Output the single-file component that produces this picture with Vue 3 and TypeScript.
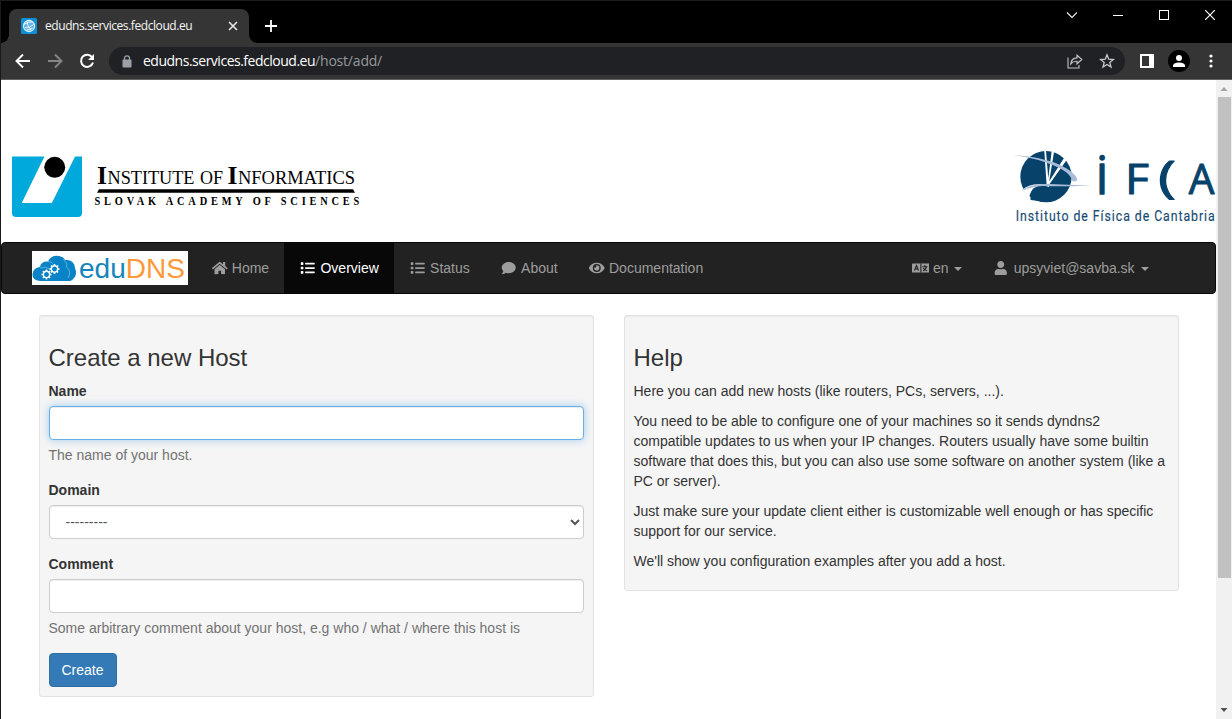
<script setup lang="ts">
import { ref } from 'vue'

interface NavItem {
  label: string
  icon: 'home' | 'list' | 'comment' | 'eye'
  active?: boolean
}

const navItems: NavItem[] = [
  { label: 'Home', icon: 'home' },
  { label: 'Overview', icon: 'list', active: true },
  { label: 'Status', icon: 'list' },
  { label: 'About', icon: 'comment' },
  { label: 'Documentation', icon: 'eye' },
]

const icons: Record<NavItem['icon'], { width: number; path: string }> = {
  home: {
    width: 576,
    path: 'M280.37 148.26L96 300.11V464a16 16 0 0 0 16 16l112.06-.29a16 16 0 0 0 15.92-16V368a16 16 0 0 1 16-16h64a16 16 0 0 1 16 16v95.64a16 16 0 0 0 16 16.05L464 480a16 16 0 0 0 16-16V300L295.67 148.26a12.19 12.19 0 0 0-15.3 0zM571.6 251.47L488 182.56V44.05a12 12 0 0 0-12-12h-56a12 12 0 0 0-12 12v72.61L318.47 43a48 48 0 0 0-61 0L4.34 251.47a12 12 0 0 0-1.6 16.9l25.5 31A12 12 0 0 0 45.15 301l235.22-193.74a12.19 12.19 0 0 1 15.3 0L530.9 301a12 12 0 0 0 16.9-1.6l25.5-31a12 12 0 0 0-1.7-16.93z',
  },
  list: {
    width: 512,
    path: 'M16 48h64a16 16 0 0 1 16 16v64a16 16 0 0 1-16 16H16a16 16 0 0 1-16-16V64a16 16 0 0 1 16-16zm0 160h64a16 16 0 0 1 16 16v64a16 16 0 0 1-16 16H16a16 16 0 0 1-16-16v-64a16 16 0 0 1 16-16zm0 160h64a16 16 0 0 1 16 16v64a16 16 0 0 1-16 16H16a16 16 0 0 1-16-16v-64a16 16 0 0 1 16-16zM176 64h320a16 16 0 0 1 16 16v32a16 16 0 0 1-16 16H176a16 16 0 0 1-16-16V80a16 16 0 0 1 16-16zm0 160h320a16 16 0 0 1 16 16v32a16 16 0 0 1-16 16H176a16 16 0 0 1-16-16v-32a16 16 0 0 1 16-16zm0 160h320a16 16 0 0 1 16 16v32a16 16 0 0 1-16 16H176a16 16 0 0 1-16-16v-32a16 16 0 0 1 16-16z',
  },
  comment: {
    width: 512,
    path: 'M256 32C114.6 32 0 125.1 0 240c0 49.6 21.4 95 57 130.7C44.5 421.1 2.7 466 2.2 466.5c-2.2 2.3-2.8 5.7-1.5 8.7S4.8 480 8 480c66.3 0 116-31.8 140.6-51.4 32.7 12.3 69 19.4 107.4 19.4 141.4 0 256-93.1 256-208S397.4 32 256 32z',
  },
  eye: {
    width: 576,
    path: 'M572.52 241.4C518.29 135.59 410.93 64 288 64S57.68 135.64 3.48 241.41a32.35 32.35 0 0 0 0 29.19C57.71 376.41 165.07 448 288 448s230.32-71.64 284.52-177.41a32.35 32.35 0 0 0 0-29.19zM288 400a144 144 0 1 1 144-144 143.93 143.93 0 0 1-144 144zm0-240a95.31 95.31 0 0 0-25.31 3.79 47.85 47.85 0 0 1-66.9 66.9A95.78 95.78 0 1 0 288 160z',
  },
}

const helpParagraphs: string[] = [
  'Here you can add new hosts (like routers, PCs, servers, ...).',
  'You need to be able to configure one of your machines so it sends dyndns2 compatible updates to us when your IP changes. Routers usually have some builtin software that does this, but you can also use some software on another system (like a PC or server).',
  'Just make sure your update client either is customizable well enough or has specific support for our service.',
  "We'll show you configuration examples after you add a host.",
]

const gearTeeth = [0, 45, 90, 135, 180, 225, 270, 315]

const hostName = ref('')
const domain = ref('')
const comment = ref('')
</script>

<template>
  <div class="window">
    <div class="titlebar">
      <div class="tab">
        <svg class="favicon" width="16" height="16" viewBox="0 0 16 16">
          <rect width="16" height="16" rx="1.5" fill="#0f8fd6" />
          <circle cx="8" cy="8" r="5.6" fill="#5fb5e6" stroke="#e6f5fd" stroke-width="1.1" />
          <path d="M3 6.5Q7 3 11.5 4M4 9.5Q8 10.500 12.600 6.500M5.500 12Q9 12 11.500 10M6 3.500Q6 7 10 12" fill="none" stroke="#f2faff" stroke-width="1" />
        </svg>
        <span class="tab-title">edudns.services.fedcloud.eu</span>
        <svg class="tab-close" width="10" height="10" viewBox="0 0 10 10">
          <path d="M1 1l8 8M9 1l-8 8" stroke="#e8e8e8" stroke-width="1.6" />
        </svg>
      </div>
      <svg class="new-tab" width="12" height="12" viewBox="0 0 12 12">
        <path d="M6 0v12M0 6h12" stroke="#fff" stroke-width="1.8" />
      </svg>
      <div class="controls">
        <svg width="12" height="10" viewBox="0 0 12 10"><path d="M2 2.500l5 5 5-5" fill="none" stroke="#eee" stroke-width="1.200" /></svg>
        <svg width="10" height="10" viewBox="0 0 10 10"><path d="M0 5.500h10" stroke="#fff" /></svg>
        <svg width="10" height="10" viewBox="0 0 10 10"><rect x=".5" y=".5" width="9" height="9" fill="none" stroke="#fff" /></svg>
        <svg width="10" height="10" viewBox="0 0 10 10"><path d="M0 0l10 10M10 0L0 10" stroke="#fff" stroke-width="1.200" /></svg>
      </div>
    </div>

    <div class="toolbar">
      <svg class="nav-button" width="16" height="16" viewBox="0 0 16 16"><path d="M15 8H2M8 1.500L1.500 8 8 14.500" fill="none" stroke="#fff" stroke-width="1.9" /></svg>
      <svg class="nav-button" width="16" height="16" viewBox="0 0 16 16"><path d="M1 8h13M8 1.500L14.500 8 8 14.500" fill="none" stroke="#858585" stroke-width="1.9" /></svg>
      <svg class="nav-button" width="16" height="16" viewBox="0 0 16 16">
        <path d="M13.300 4.500A6.100 6.100 0 1 0 14 9.500" fill="none" stroke="#fff" stroke-width="2" />
        <path d="M15 1v6H9z" fill="#fff" />
      </svg>
      <div class="address">
        <svg class="lock" width="10" height="13" viewBox="0 0 10 13">
          <rect x=".5" y="4.500" width="9" height="8" rx="1" fill="#9aa0a6" />
          <path d="M2.500 5V3.300a2.500 2.500 0 0 1 5 0V5" fill="none" stroke="#9aa0a6" stroke-width="1.300" />
        </svg>
        <span class="url"><span class="url-host">edudns.services.fedcloud.eu</span><span class="url-path">/host/add/</span></span>
        <svg class="share" width="16" height="15" viewBox="0 0 16 15">
          <path d="M1 3.500v10.500h11v-3" fill="none" stroke="#bdc1c6" stroke-width="1.100" />
          <path d="M10 1.200l4.800 4.300L10 9.800V7.300Q6 7 3.800 9.800 4.200 4.200 10 3.800z" fill="none" stroke="#bdc1c6" stroke-width="1.200" />
        </svg>
        <svg class="star" width="16" height="16" viewBox="0 0 16 16">
          <path d="M8 1.800l1.700 4.400 4.700.3-3.600 3 1.200 4.600L8 11.500l-4 2.600 1.200-4.600-3.600-3 4.700-.3z" fill="none" stroke="#c5c8cc" stroke-width="1.300" />
        </svg>
      </div>
      <svg class="side-panel" width="14" height="14" viewBox="0 0 14 14">
        <path fill-rule="evenodd" d="M0 0h14v14H0zM2 2v10h7V2z" fill="#fff" />
      </svg>
      <svg class="profile" width="22" height="22" viewBox="0 0 22 22">
        <circle cx="11" cy="11" r="11" fill="#000" />
        <circle cx="11" cy="8" r="3" fill="#fff" />
        <path d="M5 17v-1.500C5 13.200 9 12.400 11 12.400s6 .8 6 3.100V17z" fill="#fff" />
      </svg>
      <svg class="menu" width="4" height="14" viewBox="0 0 4 14">
        <circle cx="2" cy="2" r="1.600" fill="#fff" /><circle cx="2" cy="7" r="1.600" fill="#fff" /><circle cx="2" cy="12" r="1.600" fill="#fff" />
      </svg>
    </div>

    <div class="viewport">
      <div class="page">
        <header class="logos">
          <svg class="institute" width="350" height="66" viewBox="10 154 350 66">
            <path d="M12 156.500h70V213q0 4-4 4H16q-4 0-4-4z" fill="#00a9dc" />
            <path d="M44.700 156h30.600l-23.500 47H21.700z" fill="#fff" />
            <circle cx="54.700" cy="167.300" r="10.500" fill="#000" />
            <g class="serif" fill="#000">
              <text x="97" y="184" font-size="25.500" font-weight="bold">I</text>
              <text x="107.500" y="184" font-size="18.500" textLength="87" lengthAdjust="spacingAndGlyphs">NSTITUTE</text>
              <text x="200" y="184" font-size="18.500" textLength="23" lengthAdjust="spacingAndGlyphs">OF</text>
              <text x="227.500" y="184" font-size="25.500" font-weight="bold">I</text>
              <text x="238" y="184" font-size="18.500" textLength="117" lengthAdjust="spacingAndGlyphs">NFORMATICS</text>
              <text transform="translate(94.500 205.300) scale(.88 1)" font-size="11.800" font-weight="bold" textLength="301" lengthAdjust="spacing">SLOVAK ACADEMY OF SCIENCES</text>
            </g>
            <path d="M99 189.300h254l2 3.500H97z" fill="#000" />
          </svg>
          <svg class="ifca" width="216" height="92" viewBox="0 0 648 276">
            <circle cx="138" cy="110" r="77" fill="#07426b" />
            <path d="M133 32h5l9 110-7-4zM155 33l7 3-17 104-3-2zM192 54l8 6-54 76-3-5z" fill="#fff" />
            <path d="M150 136q-60-10-83 14-2 6 6 22l12 8q4-30 30-38 20-6 35-6z" fill="#fff" />
            <path d="M38 45Q125 48 182 76 226 98 232 118 230 128 216 122 211 97 160 76 110 54 38 45z" fill="#a9bcd7" />
            <path d="M66 153Q85 131 150 132L275 137Q205 139 150 139 95 137 66 153z" fill="#a9bcd7" />
            <path d="M92 180Q86 145 116 139 145 135 136 143L146 146Q120 150 134 165L110 182z" fill="#07426b" />
            <g class="ifca-letters" fill="#07426b" stroke="#07426b" stroke-width="3" stroke-linejoin="round">
              <text x="289" y="163" font-size="124" stroke-width="5">İ</text>
              <text x="375" y="163" font-size="124" textLength="72" lengthAdjust="spacingAndGlyphs">F</text>
              <text x="474" y="157" font-size="133" textLength="54" lengthAdjust="spacingAndGlyphs">(</text>
              <text x="566" y="163" font-size="124" textLength="77" lengthAdjust="spacingAndGlyphs">A</text>
            </g>
            <text class="ifca-name" transform="translate(47 242) scale(.84 1)" font-size="44" fill="#174b73" stroke="#174b73" stroke-width=".5" textLength="711" lengthAdjust="spacing">Instituto de Física de Cantabria</text>
          </svg>
        </header>

        <nav class="navbar">
          <a class="brand">
            <svg width="156" height="34" viewBox="0 0 156 34">
              <path d="M8 30Q0 29 .5 23 1 17 8 16 9 10 16 10.500 19 4 27 5 32 6 33 9 42 8 43 17 46 24 41 28 40 30 36 30z" fill="#0a83c6" />
              <path d="M8 17Q14 15 18 18M16 10.500Q19 10.500 21 12.500M31 8.500Q36 12 34.500 16 40 20 36 27" fill="none" stroke="#7cc4ea" stroke-width=".7" />
              <g v-for="(gear, g) in [{ x: 14.5, y: 23.5 }, { x: 22.5, y: 18 }]" :key="g" :transform="`translate(${gear.x} ${gear.y})`">
                <circle r="3.200" fill="#0a83c6" stroke="#fff" stroke-width="1.500" />
                <rect v-for="a in gearTeeth" :key="a" x="-.8" y="-5" width="1.600" height="1.800" fill="#fff" :transform="`rotate(${a})`" />
              </g>
              <text x="47" y="27" font-size="28"><tspan fill="#1684bd">edu</tspan><tspan fill="#ff9838">DNS</tspan></text>
            </svg>
          </a>
          <a v-for="item in navItems" :key="item.label" class="nav-link" :class="{ active: item.active }">
            <svg class="fw" width="17.500" height="14" :viewBox="`${(icons[item.icon].width - 640) / 2} 0 640 512`"><path :d="icons[item.icon].path" fill="currentColor" /></svg>
            <span>{{ item.label }}</span>
          </a>
          <div class="nav-right">
            <a class="nav-link">
              <svg class="fw" width="17.500" height="14" viewBox="0 0 17.500 14">
                <rect y="2.500" width="17.500" height="9" rx=".5" fill="currentColor" />
                <path d="M2.500 9.500l2-5 2 5M3.200 8h2.600M12.900 4v1.500M10.300 5.700h5.200M11 9.700q3-1 3.600-4M11.500 7q1 2 3.500 2.700M8.900 2.500v9" fill="none" stroke="#222" stroke-width="1.100" />
              </svg>
              <span>en</span><i class="caret"></i>
            </a>
            <a class="nav-link">
              <svg class="fw" width="17.500" height="14" viewBox="-96 0 640 512"><path d="M224 256c70.700 0 128-57.300 128-128S294.700 0 224 0 96 57.300 96 128s57.300 128 128 128zm89.600 32h-16.700c-22.200 10.200-46.900 16-72.900 16s-50.600-5.800-72.900-16h-16.700C60.200 288 0 348.200 0 422.400V464c0 26.500 21.500 48 48 48h352c26.500 0 48-21.500 48-48v-41.600c0-74.200-60.200-134.400-134.400-134.400z" fill="currentColor" /></svg>
              <span>upsyviet@savba.sk</span><i class="caret"></i>
            </a>
          </div>
        </nav>

        <main class="columns">
          <form class="well" @submit.prevent>
            <h3>Create a new Host</h3>
            <div class="group">
              <label for="name">Name</label>
              <input id="name" v-model="hostName" class="control focused" type="text" />
              <p class="hint">The name of your host.</p>
            </div>
            <div class="group">
              <label for="domain">Domain</label>
              <select id="domain" v-model="domain" class="control">
                <option value="">---------</option>
              </select>
            </div>
            <div class="group">
              <label for="comment">Comment</label>
              <input id="comment" v-model="comment" class="control" type="text" />
              <p class="hint">Some arbitrary comment about your host, e.g who / what / where this host is</p>
            </div>
            <button class="create" type="submit">Create</button>
          </form>
          <section class="well help">
            <h3>Help</h3>
            <p v-for="text in helpParagraphs" :key="text">{{ text }}</p>
          </section>
        </main>
      </div>

      <div class="scrollbar">
        <svg width="16" height="17" viewBox="0 0 16 17"><path d="M8 7l3.500 4h-7z" fill="#a3a3a3" /></svg>
        <div class="thumb"></div>
        <svg class="down" width="16" height="17" viewBox="0 0 16 17"><path d="M4.500 6h7L8 10z" fill="#505050" /></svg>
      </div>
    </div>
  </div>
</template>

<style>
html,
body {
  margin: 0;
  overflow: hidden;
}
</style>

<style scoped>
.window {
  box-sizing: border-box;
  width: 1232px;
  height: 719px;
  display: flex;
  flex-direction: column;
  border-left: 1px solid #1a1a1c;
  background: #fff;
  overflow: hidden;
  font: 14px/20px "Liberation Sans", Arial, sans-serif;
  color: #333;
}
svg {
  display: block;
  flex: none;
}
.titlebar {
  box-sizing: border-box;
  height: 43px;
  border-top: 1px solid #1a1a1c;
  background: #000;
  display: flex;
  padding-left: 8px;
}
.tab {
  position: relative;
  box-sizing: border-box;
  width: 240px;
  height: 34px;
  margin-top: 8px;
  padding: 0 11px 0 12px;
  border-radius: 8px 8px 0 0;
  background: #353535;
  display: flex;
  align-items: center;
}
.tab::before,
.tab::after {
  content: "";
  position: absolute;
  bottom: 0;
  width: 8px;
  height: 8px;
}
.tab::before {
  left: -8px;
  background: radial-gradient(circle at 0 0, transparent 7.5px, #353535 8px);
}
.tab::after {
  right: -8px;
  background: radial-gradient(circle at 100% 0, transparent 7.5px, #353535 8px);
}
.tab-title {
  margin-left: 8px;
  font: 12px/16px "Open Sans", "Noto Sans", sans-serif;
  letter-spacing: -0.43px;
  color: #f5f5f5;
  white-space: nowrap;
}
.tab-close {
  margin-left: auto;
}
.new-tab {
  margin: 19px 0 0 16px;
}
.controls {
  display: flex;
  gap: 36px;
  margin: 9px 17px 0 auto;
}
.toolbar {
  box-sizing: border-box;
  height: 37px;
  border-bottom: 1px solid #606060;
  background: #353535;
  display: flex;
  align-items: center;
  padding-left: 14px;
}
.nav-button {
  margin-right: 16px;
}
.address {
  width: 1016px;
  height: 28px;
  margin-left: -2px;
  border-radius: 14px;
  background: #202124;
  display: flex;
  align-items: center;
}
.lock {
  margin-left: 13px;
}
.url {
  margin-left: 11px;
  font: 14px/20px "Open Sans", "Noto Sans", sans-serif;
  letter-spacing: -0.49px;
  white-space: nowrap;
}
.url-host {
  color: #fff;
}
.url-path {
  color: #969a9e;
  letter-spacing: -0.2px;
}
.share {
  margin-left: auto;
}
.star {
  margin: 0 10px 0 16px;
}
.side-panel {
  margin-left: 15px;
}
.profile {
  margin-left: 14px;
}
.menu {
  margin-left: 19px;
}
.viewport {
  flex: 1;
  min-height: 0;
  display: flex;
}
.page {
  width: 1215px;
}
.logos {
  height: 162px;
  display: flex;
  justify-content: space-between;
}
.institute {
  margin: 74px 0 0 9px;
}
.serif {
  font-family: "Liberation Serif", "Times New Roman", serif;
}
.ifca {
  margin-top: 60px;
}
.ifca-letters {
  font-family: "Open Sans", sans-serif;
}
.ifca-name {
  font-family: Roboto, sans-serif;
}
.navbar {
  box-sizing: border-box;
  height: 52px;
  margin-bottom: 21px;
  padding-left: 30px;
  border: 1px solid #080808;
  border-radius: 4px;
  background: #222;
  display: flex;
}
.brand {
  width: 156px;
  height: 34px;
  margin: 8px 7.5px 0 0;
  background: #fff;
}
.nav-link {
  box-sizing: border-box;
  height: 50px;
  padding: 15px;
  display: flex;
  color: #9d9d9d;
  text-decoration: none;
}
.nav-link.active {
  color: #fff;
  background: #080808;
}
.fw {
  margin: 3px 3.8px 0 0;
}
.nav-right {
  margin: 0 51.5px 0 auto;
  display: flex;
}
.caret {
  align-self: center;
  margin: 2px 0 0 5.900px;
  border-top: 4px solid currentColor;
  border-left: 4px solid transparent;
  border-right: 4px solid transparent;
}
.columns {
  width: 1140px;
  margin: 0 auto;
  display: flex;
  align-items: flex-start;
  gap: 30px;
}
.well {
  box-sizing: border-box;
  width: 555px;
  padding: 9px;
  border: 1px solid #e3e3e3;
  border-radius: 3px;
  background: #f5f5f5;
  box-shadow: inset 0 1px 1px rgba(0, 0, 0, 0.05);
}
h3 {
  margin: 20px 0 10px;
  font-size: 24px;
  font-weight: 500;
  line-height: 26.4px;
}
p {
  margin: 0 0 10px;
}
.group {
  margin-bottom: 15px;
}
label {
  display: block;
  margin-bottom: 5px;
  font-weight: 700;
}
.control {
  box-sizing: border-box;
  display: block;
  width: 100%;
  height: 34px;
  margin: 0;
  padding: 6px 12px;
  border: 1px solid #ccc;
  border-radius: 4px;
  background-color: #fff;
  box-shadow: inset 0 1px 1px rgba(0, 0, 0, 0.075);
  color: #555;
  font: inherit;
  outline: 0;
}
.control.focused,
.control:focus {
  border-color: #66afe9;
  box-shadow: inset 0 1px 1px rgba(0, 0, 0, 0.075), 0 0 8px rgba(102, 175, 233, 0.6);
}
.hint {
  margin: 5px 0 0;
  color: #737373;
}
.create {
  display: block;
  height: 34px;
  padding: 6px 12px;
  border: 1px solid #2e6da4;
  border-radius: 4px;
  background: #337ab7;
  color: #fff;
  font: inherit;
}
.scrollbar {
  width: 16px;
  background: #f1f1f1;
  display: flex;
  flex-direction: column;
}
.thumb {
  width: 13px;
  height: 481px;
  margin-left: 2px;
  background: #c1c1c1;
}
.down {
  margin-top: auto;
}
</style>
